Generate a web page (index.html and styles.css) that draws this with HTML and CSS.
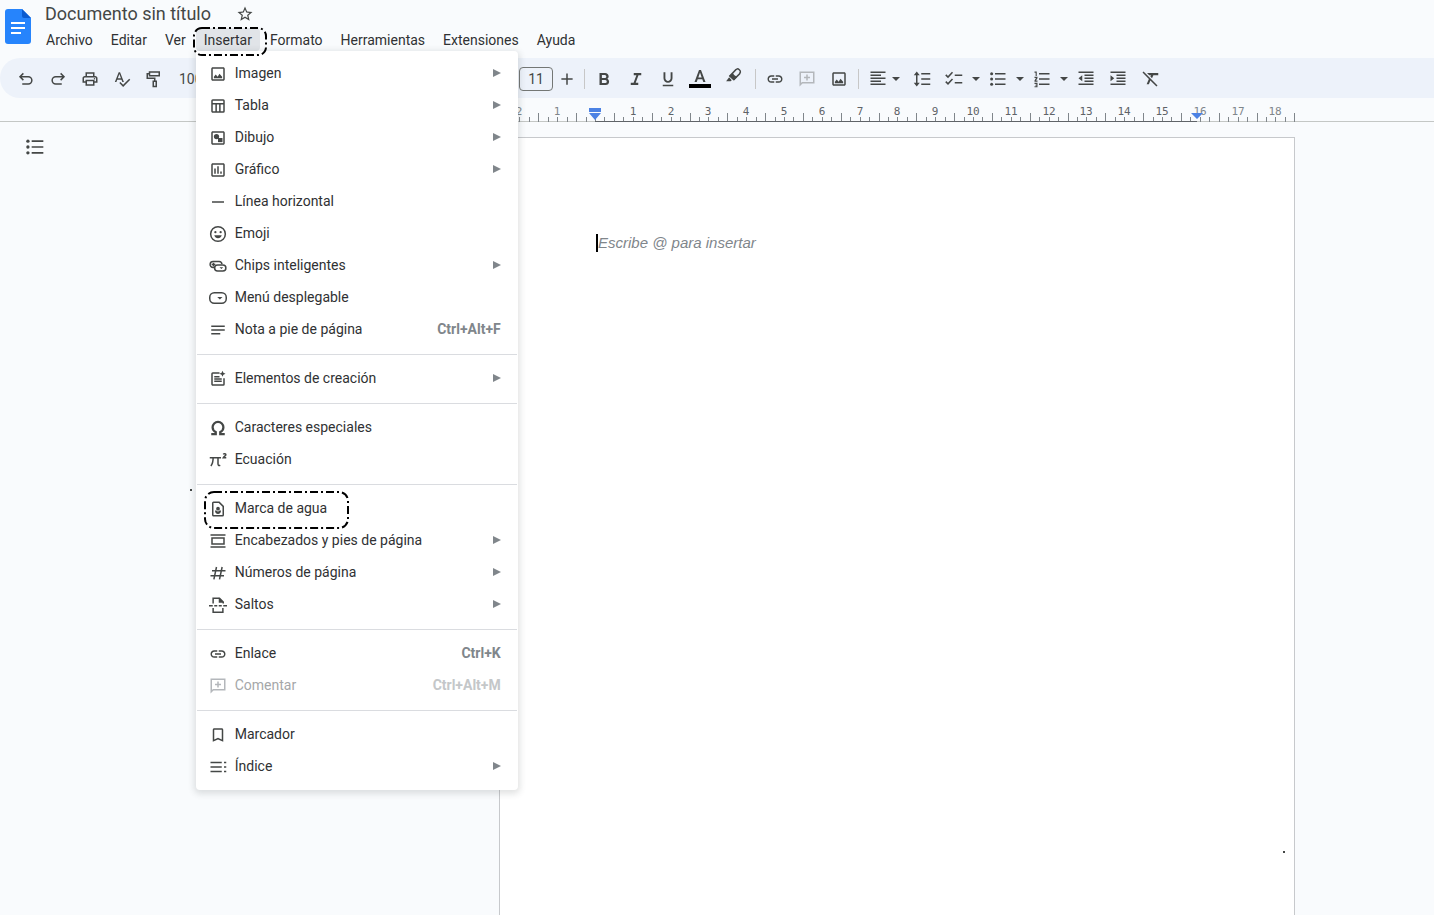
FILE: index.html
```html
<!DOCTYPE html>
<html lang="es">
<head>
<meta charset="utf-8">
<title>Documento sin título</title>
<link rel="stylesheet" href="styles.css">
</head>
<body>
<header class="header">
  <svg class="logo" viewBox="0 0 26 35" aria-hidden="true">
    <path fill="#2684fc" d="M3 0h14l9 9v23a3 3 0 0 1-3 3H3a3 3 0 0 1-3-3V3a3 3 0 0 1 3-3z"/>
    <path fill="#0b5bd0" d="M17 0l9 9h-7a2 2 0 0 1-2-2z"/>
    <path fill="#fff" d="M6 13h14v2H6zM6 18h14v2H6zM6 23h10v2H6z"/>
  </svg>
  <div class="header-text">
    <div class="title-row">
      <h1 class="title">Documento sin título</h1>
      <button class="star" aria-label="Destacar"><svg class="icon" viewBox="0 0 24 24"><path d="M22 9.24l-7.19-.62L12 2 9.19 8.63 2 9.24l5.46 4.73L5.82 21 12 17.27 18.18 21l-1.63-7.03L22 9.24zM12 15.4l-3.76 2.27 1-4.28-3.32-2.88 4.38-.38L12 6.1l1.71 4.04 4.38.38-3.32 2.88 1 4.28L12 15.4z"/></svg></button>
    </div>
    <nav class="menubar">
      <button>Archivo</button>
      <button>Editar</button>
      <button>Ver</button>
      <div class="menu-anchor">
        <button class="open" aria-expanded="true">Insertar</button>
        <div class="menu" role="menu">
          <button class="item"><svg class="icon" viewBox="0 0 24 24"><path d="M19 5v14H5V5h14m0-2H5c-1.1 0-2 .9-2 2v14c0 1.1.9 2 2 2h14c1.1 0 2-.9 2-2V5c0-1.1-.9-2-2-2zM6.500 17.500v-2l2.500-3 2.500 3 2.500-4 3.500 4v2z"/></svg><span>Imagen</span><i class="arrow"></i></button>
          <button class="item"><svg class="icon" viewBox="0 0 24 24"><path d="M19 3H5a2 2 0 0 0-2 2v14c0 1.100.9 2 2 2h14a2 2 0 0 0 2-2V5a2 2 0 0 0-2-2zm0 2v3H5V5zM5 10h3.500v9H5zm5.500 0h3v9h-3zm5 9v-9H19v9z"/></svg><span>Tabla</span><i class="arrow"></i></button>
          <button class="item"><svg class="icon" viewBox="0 0 24 24"><path d="M19 5v14H5V5h14m0-2H5c-1.100 0-2 .9-2 2v14c0 1.100.9 2 2 2h14c1.100 0 2-.9 2-2V5c0-1.100-.9-2-2-2z"/><circle cx="10" cy="10" r="3.500"/><path d="M12 12h6v5.500h-6z"/></svg><span>Dibujo</span><i class="arrow"></i></button>
          <button class="item"><svg class="icon" viewBox="0 0 24 24"><path d="M19 5v14H5V5h14m0-2H5c-1.100 0-2 .9-2 2v14c0 1.100.9 2 2 2h14c1.100 0 2-.9 2-2V5c0-1.100-.9-2-2-2zM7 10h2v7H7zm4-3h2v10h-2zm4 7h2v3h-2z"/></svg><span>Gráfico</span><i class="arrow"></i></button>
          <button class="item"><svg class="icon" viewBox="0 0 24 24"><path d="M4 11h16v2H4z"/></svg><span>Línea horizontal</span></button>
          <button class="item"><svg class="icon" viewBox="0 0 24 24"><circle class="line" cx="12" cy="12" r="9.800"/><circle cx="8.500" cy="9.500" r="1.500"/><circle cx="15.500" cy="9.500" r="1.500"/><path d="M7 13.500h10c-.8 2.300-2.600 4-5 4s-4.200-1.700-5-4z"/></svg><span>Emoji</span></button>
          <button class="item"><svg class="icon" viewBox="0 0 24 24"><path class="line" d="M7.500 14H5.500a4 4 0 0 1-4-4.500 4 4 0 0 1 4-3.500h8a4 4 0 0 1 3.800 3.500"/><rect class="line" x="7.500" y="10.500" width="15" height="8" rx="4"/><path d="M3.500 9h5v2h-5zM5 7.500h2v5H5zM14 13.500h5L16.500 16z"/></svg><span>Chips inteligentes</span><i class="arrow"></i></button>
          <button class="item"><svg class="icon" viewBox="0 0 24 24"><rect class="line" x="1" y="5" width="22" height="14" rx="6"/><path d="M11 10.500h7l-3.500 3.500z"/></svg><span>Menú desplegable</span></button>
          <button class="item"><svg class="icon" viewBox="0 0 24 24"><path d="M3 6h18v2H3zM3 11h18v2H3zM3 16h12v2H3z"/></svg><span>Nota a pie de página</span><kbd>Ctrl+Alt+F</kbd></button>
          <hr>
          <button class="item"><svg class="icon" viewBox="0 0 24 24"><path d="M14 3H5a2 2 0 0 0-2 2v14c0 1.100.9 2 2 2h14a2 2 0 0 0 2-2v-8h-2v8H5V5h9zM7 8h7v2H7zm0 3h10v2H7zm0 3h10v2H7zM18 1l1.200 2.800L22 5l-2.800 1.200L18 9l-1.200-2.800L14 5l2.800-1.200z"/></svg><span>Elementos de creación</span><i class="arrow"></i></button>
          <hr>
          <button class="item"><svg class="icon" viewBox="0 0 24 24"><path class="bold-line" d="M3 20h6v-2.500A7.500 7.500 0 0 1 4.800 11a7.200 7.200 0 0 1 14.400 0 7.500 7.500 0 0 1-4.200 6.500V20h6"/></svg><span>Caracteres especiales</span></button>
          <button class="item"><svg class="icon" viewBox="0 0 24 24"><path class="line" d="M1 9h15M5.500 9c0 5-.5 8-3 11M12 9v8c0 2 1 3 3 2M19 4.500c1-1.500 3.500-1 3.500.5S20 7 19 9h4"/></svg><span>Ecuación</span></button>
          <hr>
          <button class="item"><svg class="icon" viewBox="0 0 24 24"><path d="M14 2H6a2 2 0 0 0-2 2v16c0 1.100.9 2 2 2h12a2 2 0 0 0 2-2V8zm4 18H6V4h7l5 5z"/><circle cx="12" cy="11.500" r="2.500"/><path d="M8 14c2 0 3 .5 4 1.500 1-1 2-1.500 4-1.500 0 3-1.500 4.500-4 4.500S8 17 8 14z"/></svg><span>Marca de agua</span>
            <svg class="callout callout-item" aria-hidden="true"><rect x="1" y="1" width="143" height="36" rx="9"/></svg></button>
          <button class="item"><svg class="icon" viewBox="0 0 24 24"><path d="M2 3h20v2H2zM2 19h20v2H2zM19 9v6H5V9zm2-2H3v10h18z"/></svg><span>Encabezados y pies de página</span><i class="arrow"></i></button>
          <button class="item"><svg class="icon" viewBox="0 0 24 24"><path class="line" d="M4 9h18M2 15.500h18M10 4L6.500 20.500M17.500 4L14 20.500"/></svg><span>Números de página</span><i class="arrow"></i></button>
          <button class="item"><svg class="icon" viewBox="0 0 24 24"><path class="line" d="M5.500 10V3H14l5 5v2M5.500 16v5.500h13V16"/><path d="M13 2l7 7h-7zM0 12h5v2H0zM7 12h4v2H7zM13 12h4v2h-4zM19 12h5v2h-5z"/></svg><span>Saltos</span><i class="arrow"></i></button>
          <hr>
          <button class="item"><svg class="icon" viewBox="0 0 24 24"><use href="#link"/></svg><span>Enlace</span><kbd>Ctrl+K</kbd></button>
          <button class="item" disabled><svg class="icon" viewBox="0 0 24 24"><use href="#comment"/></svg><span>Comentar</span><kbd>Ctrl+Alt+M</kbd></button>
          <hr>
          <button class="item"><svg class="icon" viewBox="0 0 24 24"><path d="M17 3H7c-1.100 0-2 .9-2 2v16l7-3 7 3V5c0-1.100-.9-2-2-2zm0 15l-5-2.180L7 18V5h10z"/></svg><span>Marcador</span></button>
          <button class="item"><svg class="icon" viewBox="0 0 24 24"><path d="M2 5h15v2H2zM2 11h15v2H2zM2 17h15v2H2zM20 5h3v2h-3zM20 11h3v2h-3zM20 17h3v2h-3z"/></svg><span>Índice</span><i class="arrow"></i></button>
        </div>
        <svg class="callout callout-menu" aria-hidden="true"><rect x="1" y="1" width="72" height="27" rx="8"/></svg>
      </div>
      <button>Formato</button>
      <button>Herramientas</button>
      <button>Extensiones</button>
      <button>Ayuda</button>
    </nav>
  </div>
</header>

<div class="toolbar" role="toolbar">
  <button class="tool" aria-label="Deshacer"><svg class="icon" viewBox="0 0 24 24"><path class="line" d="M8.500 4.500L4 9l4.500 4.500M4.500 9H15a4.800 4.800 0 0 1 0 9.600H7"/></svg></button>
  <button class="tool" aria-label="Rehacer"><svg class="icon" viewBox="0 0 24 24"><path class="line" d="M15.500 4.500L20 9l-4.500 4.500M19.500 9H9a4.800 4.800 0 0 0 0 9.600h8"/></svg></button>
  <button class="tool" aria-label="Imprimir"><svg class="icon" viewBox="0 0 24 24"><path d="M19 8h-1V3H6v5H5c-1.660 0-3 1.340-3 3v6h4v4h12v-4h4v-6c0-1.660-1.340-3-3-3zM8 5h8v3H8V5zm8 14H8v-4h8v4zm2-4v-2H6v2H4v-4c0-.55.45-1 1-1h14c.55 0 1 .45 1 1v4h-2z"/><circle cx="18" cy="11.500" r="1"/></svg></button>
  <button class="tool" aria-label="Ortografía"><svg class="icon" viewBox="0 0 24 24"><path d="M12.450 16h2.090L9.430 3H7.570L2.460 16h2.090l1.120-3h5.640l1.140 3zm-6.020-5L8.500 5.480 10.570 11H6.430zm15.160.59l-8.090 8.090L9.830 16l-1.410 1.410 5.090 5.090L23 13l-1.410-1.410z"/></svg></button>
  <button class="tool" aria-label="Copiar formato"><svg class="icon" viewBox="0 0 24 24"><path class="line" d="M6 2.500h13v5H6zM6 5H3v6h10v4"/><path class="line" d="M11 15h4v7h-4z"/></svg></button>
  <div class="zoom-group"><select class="zoom" aria-label="Zoom"><option>100%</option></select></div>
  <input class="size" aria-label="Tamaño de fuente" value="11">
  <button class="tool plus" aria-label="Aumentar"><svg class="icon" viewBox="0 0 24 24"><path class="line" d="M12 4.500v15M4.500 12h15"/></svg></button>
  <i class="sep"></i>
  <button class="tool" aria-label="Negrita"><svg class="icon" viewBox="0 0 24 24"><path d="M16.500 11.500c1-.7 1.700-1.900 1.700-3C18.200 5.700 16.200 4 13.500 4H6v16h8.200c2.700 0 4.600-2 4.600-4.500 0-1.800-1-3.300-2.300-4zM9.200 6.700h3.900a2 2 0 0 1 0 4H9.200zm4.500 10.500H9.200v-4h4.500a2 2 0 0 1 0 4z"/></svg></button>
  <button class="tool" aria-label="Cursiva"><svg class="icon" viewBox="0 0 24 24"><path d="M9 4v3h3.500l-3.700 10H5v3h10v-3h-3.400l3.700-10H19V4z"/></svg></button>
  <button class="tool" aria-label="Subrayado"><svg class="icon" viewBox="0 0 24 24"><path d="M12 17c3.310 0 6-2.690 6-6V3h-2.500v8c0 1.930-1.570 3.500-3.500 3.500S8.500 12.930 8.500 11V3H6v8c0 3.310 2.690 6 6 6zm-7 2.500v2h14v-2H5z"/></svg></button>
  <button class="tool" aria-label="Color del texto"><svg class="icon color-icon" viewBox="0 0 22 18"><path d="M10 0L5.500 12h2.200l1-2.800h4.600l1 2.800h2.200L12 0zM9.300 7.400L11 2.500l1.700 4.900z"/><path fill="#000" d="M0 14h22v4H0z"/></svg></button>
  <button class="tool marker" aria-label="Resaltar"><svg class="icon" viewBox="0 0 24 24"><path class="line" d="M14.500 3.500l2-1c1-.5 4.500 2.500 4 4l-1 2.500-7.500 7.500-5.500-4.500z"/><path d="M10 8l6 5.500-4.500 4.500-6-6zM5.500 13.500L1.500 19h6l1.500-1.500z"/><path fill="#edf2fa" d="M11.500 9.500l2.500-2.500 2 2-2.500 2.500z"/></svg></button>
  <i class="sep"></i>
  <button class="tool" aria-label="Insertar enlace"><svg class="icon" viewBox="0 0 24 24"><g id="link"><path d="M3.900 12c0-1.710 1.390-3.100 3.100-3.100h4V7H7c-2.760 0-5 2.240-5 5s2.240 5 5 5h4v-1.900H7c-1.710 0-3.100-1.390-3.100-3.100zM8 13h8v-2H8v2zm9-6h-4v1.900h4c1.710 0 3.100 1.390 3.100 3.100s-1.390 3.100-3.100 3.100h-4V17h4c2.760 0 5-2.240 5-5s-2.240-5-5-5z"/></g></svg></button>
  <button class="tool" aria-label="Añadir comentario" disabled><svg class="icon" viewBox="0 0 24 24"><g id="comment"><path d="M22 2H2v20l4-4h16zm-2 14H5.200L4 17.200V4h16zM11 6h2v3h3v2h-3v3h-2v-3H8V9h3z"/></g></svg></button>
  <button class="tool" aria-label="Insertar imagen"><svg class="icon" viewBox="0 0 24 24"><path d="M19 5v14H5V5h14m0-2H5c-1.100 0-2 .9-2 2v14c0 1.100.9 2 2 2h14c1.100 0 2-.9 2-2V5c0-1.100-.9-2-2-2zM6.500 17.500v-2l2.500-3 2.500 3 2.500-4 3.500 4v2z"/></svg></button>
  <i class="sep"></i>
  <button class="split tight" aria-label="Alineación"><svg class="icon" viewBox="0 0 24 24"><path d="M2 2h20v2H2zM2 6h14v2H2zM2 10h20v2H2zM2 14h14v2H2zM2 18h20v2H2z"/></svg><i class="caret"></i></button>
  <button class="tool" aria-label="Interlineado"><svg class="icon" viewBox="0 0 24 24"><path d="M5 2L1 7h3v10H1l4 5 4-5H6V7h3zM11 4h12v2H11zM11 11h12v2H11zM11 18h12v2H11z"/></svg></button>
  <button class="split" aria-label="Lista de comprobación"><svg class="icon" viewBox="0 0 24 24"><path class="line" d="M1 6.500L4 9.500 10 3M1 15.500l3 3 6-6.500"/><path d="M13 6h10v2H13zM13 16h10v2H13z"/></svg><i class="caret"></i></button>
  <button class="split" aria-label="Lista con viñetas"><svg class="icon" viewBox="0 0 24 24"><use href="#bullets"/></svg><i class="caret"></i></button>
  <button class="split" aria-label="Lista numerada"><svg class="icon" viewBox="0 0 24 24"><path d="M8 4h14v2H8zM8 11h14v2H8zM8 18h14v2H8zM2 2h3v6H3.500V3.500H2zM2 9h4v2l-2 3h2v1.500H2V14l2-3.500H2zM2 17h4v6H2v-1.300h2.500v-1H3v-1.200h1.500v-1H2z"/></svg><i class="caret"></i></button>
  <button class="tool" aria-label="Reducir sangría"><svg class="icon" viewBox="0 0 24 24"><path d="M2 2h20v2H2zM10 6h12v2H10zM10 10h12v2H10zM10 14h12v2H10zM2 18h20v2H2zM7 7v8l-5-4z"/></svg></button>
  <button class="tool" aria-label="Aumentar sangría"><svg class="icon" viewBox="0 0 24 24"><path d="M2 2h20v2H2zM10 6h12v2H10zM10 10h12v2H10zM10 14h12v2H10zM2 18h20v2H2zM2 7v8l5-4z"/></svg></button>
  <button class="tool" aria-label="Borrar formato"><svg class="icon" viewBox="0 0 24 24"><path d="M8 4h15v3h-6.500l-1.800 4-2.200-2.200.8-1.800H11zM3.400 2L2 3.400l8.500 8.500L7.500 19h3l2-5 8.100 8L22 20.600z"/></svg></button>
</div>

<div class="ruler">
  <svg class="scale" id="scale" aria-hidden="true">
    <g id="ticks"></g>
    <path class="active-line" d="M96 23.500h602"/>
    <path class="indent" d="M90 10h12v4H90zM90 15h12l-6 7zM692 15h12l-6 6z"/>
  </svg>
</div>

<main class="workspace">
  <aside class="outline">
    <button class="outline-button" aria-label="Mostrar esquema"><svg class="icon" viewBox="0 0 24 24"><g id="bullets"><path d="M8 4h14v2H8zM8 11h14v2H8zM8 18h14v2H8z"/><circle cx="3.500" cy="5" r="2"/><circle cx="3.500" cy="12" r="2"/><circle cx="3.500" cy="19" r="2"/></g></svg></button>
    <i class="speck speck-left"></i>
  </aside>
  <article class="page">
    <p class="placeholder">Escribe @ para insertar</p>
    <i class="speck speck-page"></i>
  </article>
</main>
<script src="ruler.js"></script>
</body>
</html>
```
FILE: ruler.js
```js
// Centimetre scale of an A4 page: quarter ticks, taller ones at each half.
const NS = "http://www.w3.org/2000/svg";
const ticks = document.getElementById("ticks");
const origin = 96;
const cm = 37.8;
for (let q = -10; q <= 74; q++) {
  const x = Math.round(origin + (q * cm) / 4);
  const tall = Math.abs(q % 4) === 2;
  const line = document.createElementNS(NS, "path");
  line.setAttribute("d", `M${x + 0.5} ${tall ? 15 : 19}V24`);
  ticks.append(line);
  if (q % 4 === 0 && q !== 0) {
    const label = document.createElementNS(NS, "text");
    label.setAttribute("x", x);
    label.setAttribute("y", 17);
    label.textContent = Math.abs(q / 4);
    if (q < 0 || q >= 64) label.setAttribute("class", "outside");
    ticks.append(label);
  }
}
```
FILE: styles.css
```css
* { box-sizing: border-box; }
body {
  margin: 0;
  min-height: 100vh;
  display: flex;
  flex-direction: column;
  overflow: hidden;
  background: #f9fbfd;
  color: #444746;
  font-family: Roboto, "Liberation Sans", sans-serif;
  font-size: 14px;
}
button, input, select { font: inherit; color: inherit; border: 0; background: none; padding: 0; margin: 0; }
.icon { width: 18px; height: 18px; flex: none; display: block; fill: #444746; }
.line { fill: none; stroke: #444746; stroke-width: 2; }
.bold-line { fill: none; stroke: #444746; stroke-width: 3; }

.header { display: flex; height: 58px; padding-left: 5px; }
.logo { width: 26px; height: 35px; margin-top: 9px; }
.header-text { padding-left: 7px; }
.title-row { display: flex; align-items: center; gap: 25px; height: 28px; padding-left: 7px; }
.title { margin: 0; font-size: 18px; font-weight: 400; line-height: 28px; }
.menubar { display: flex; gap: 2px; color: #303133; }
.menubar > button, .open { height: 23px; padding: 0 8px; border-radius: 4px; }
.menu-anchor { position: relative; }
.open { background: #e1e4e8; }

.menu {
  position: absolute;
  z-index: 2;
  top: 23px;
  left: 0;
  width: 322px;
  padding: 6px 0 8px;
  border-radius: 0 4px 4px 4px;
  background: #fff;
  box-shadow: 0 2px 6px 2px rgba(60, 64, 67, .15);
}
.menu hr { height: 1px; margin: 9px 1px 7px; border: 0; background: #dadce0; }
.item {
  position: relative;
  display: flex;
  align-items: center;
  gap: 8px;
  width: 100%;
  height: 32px;
  padding: 0 17px 0 13px;
  color: #303133;
  text-align: left;
}
.item .icon { margin-top: 1px; }
.item span { flex: 1; white-space: nowrap; }
.item kbd { font: inherit; font-weight: 700; color: #80868b; }
.arrow { border: 4px solid transparent; border-left: 8px solid #80868b; border-right: 0; }
.item:disabled { color: #a5a7a9; }
.item:disabled kbd { color: #c4c7c9; }
.item:disabled .icon, .tool:disabled .icon { fill: #b4b7bb; }

.callout { position: absolute; z-index: 3; fill: none; stroke: #000; stroke-width: 2; stroke-dasharray: 8 3 2 3; pointer-events: none; }
.callout-menu { top: -1px; left: -3px; width: 74px; height: 29px; }
.callout-item { top: -1px; left: 8px; width: 145px; height: 38px; }

.toolbar { display: flex; align-items: center; height: 40px; padding: 1px 0 0 10px; border-radius: 20px 0 0 20px; background: #edf2fa; }
.tool { display: flex; align-items: center; justify-content: center; width: 32px; height: 28px; }
.zoom-group { width: 349px; padding-left: 9px; }
.zoom { width: 60px; appearance: none; }
.size { width: 34px; height: 24px; border: 1px solid #747775; border-radius: 4px; text-align: center; }
.plus { width: 28px; }
.sep { width: 1px; height: 20px; margin: 0 3px; background: #c7c7c7; }
.color-icon { width: 22px; }
.marker { width: 36px; padding-bottom: 6px; }
.split { display: flex; align-items: center; gap: 9px; width: 44px; padding-left: 7px; }
.tight { gap: 5px; }
.caret { border: 4px solid transparent; border-top: 4px solid #444746; border-bottom: 0; }

.ruler, .workspace { display: grid; grid-template-columns: 499px 796px 1fr; }
.ruler { height: 24px; border-bottom: 1px solid #c4c7c5; }
.scale { grid-column: 2; width: 796px; height: 24px; }
#ticks path { stroke: #80868b; stroke-width: 1; }
#ticks text { font-family: "DejaVu Sans Mono", monospace; font-size: 11px; text-anchor: middle; fill: #5f6368; }
#ticks .outside { fill: #80868b; }
.active-line { stroke: #5f6368; }
.indent { fill: #4c82e4; }

.workspace { flex: 1; }
.outline { position: relative; padding: 15px 25px; }
.outline-button .icon { width: 20px; height: 20px; }
.page { position: relative; margin-top: 15px; padding: 96px; border: 1px solid #c7c9cc; border-bottom: 0; background: #fff; }
.placeholder {
  margin: 0;
  border-left: 2px solid #000;
  color: #80868b;
  font: italic 15px/18px "Liberation Sans", Arial, sans-serif;
}
.speck { position: absolute; width: 2px; height: 2px; background: #444746; }
.speck-left { top: 367px; right: 307px; }
.speck-page { top: 713px; right: 9px; }
```
